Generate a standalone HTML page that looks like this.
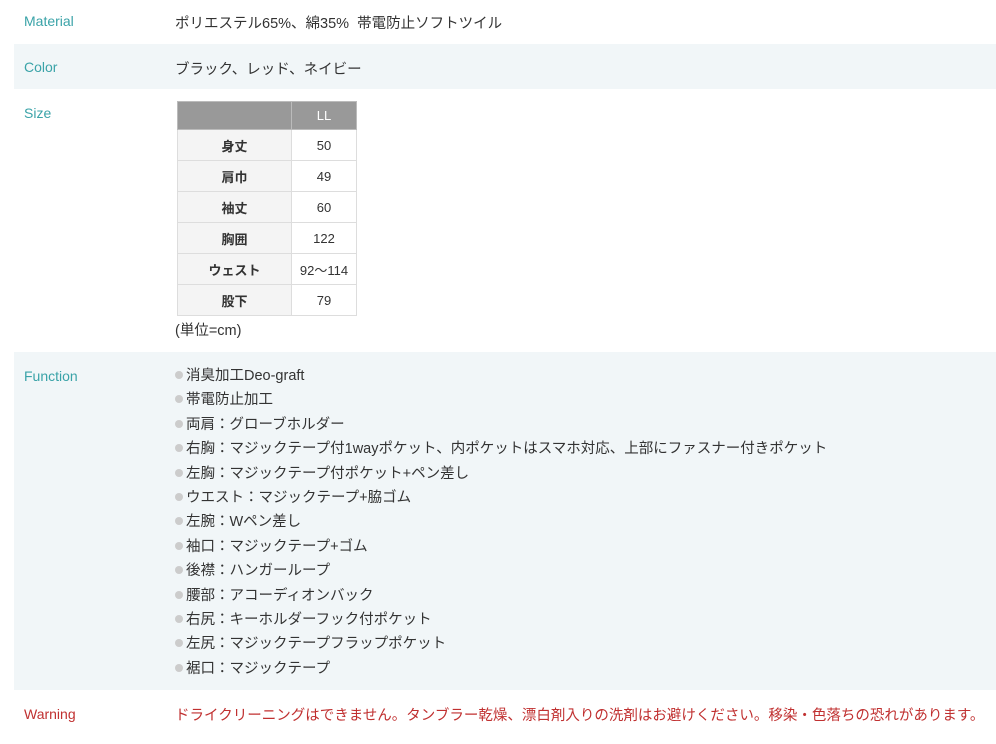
<!DOCTYPE html>
<html><head><meta charset="utf-8"><style>
body{margin:0;background:#fff;font-family:"Liberation Sans","Noto Sans CJK JP",sans-serif;font-size:14.5px;color:#333;width:996px;height:744px;overflow:hidden;position:relative}
.row{position:absolute;left:14px;right:0}
.lab{position:absolute;left:10px;color:#3aa3a8;font-size:14px}
.val{position:absolute;left:161px}
.bg{background:#f1f6f8}
table{border-collapse:collapse;position:absolute;left:177px;top:101px;font-size:13px}
td{border:1px solid #ddd;height:30px;text-align:center;padding:0}
td.h{background:#999;color:#fff;height:27px;border-color:#bbb}
td.k{background:#f4f4f4;font-weight:bold;width:113px}
td.v{width:64px;background:#fff}
ul{list-style:none;margin:0;padding:0}
li{height:24.4px;line-height:24.4px}
li:before{content:"";display:inline-block;width:8px;height:8px;border-radius:50%;background:#ccc;margin-right:3px;vertical-align:1px}
</style></head><body>
<div class="row" style="top:0;height:44px"><span class="lab" style="top:13px">Material</span><span class="val" style="top:12px">ポリエステル65%、綿35%&nbsp; 帯電防止ソフトツイル</span></div>
<div class="row bg" style="top:44px;height:45px"><span class="lab" style="top:15px">Color</span><span class="val" style="top:14px">ブラック、レッド、ネイビー</span></div>
<div class="row" style="top:89px;height:263px"><span class="lab" style="top:16px">Size</span></div>
<table>
<tr><td class="h" style="width:113px"></td><td class="h">LL</td></tr>
<tr><td class="k">身丈</td><td class="v">50</td></tr>
<tr><td class="k">肩巾</td><td class="v">49</td></tr>
<tr><td class="k">袖丈</td><td class="v">60</td></tr>
<tr><td class="k">胸囲</td><td class="v">122</td></tr>
<tr><td class="k">ウェスト</td><td class="v">92～114</td></tr>
<tr><td class="k">股下</td><td class="v">79</td></tr>
</table>
<div style="position:absolute;left:175px;top:319px">(単位=cm)</div>
<div class="row bg" style="top:352px;height:338px"><span class="lab" style="top:16px">Function</span>
<ul class="val" style="top:12px;left:161px">
<li>消臭加工Deo-graft</li><li>帯電防止加工</li><li>両肩：グローブホルダー</li><li>右胸：マジックテープ付1wayポケット、内ポケットはスマホ対応、上部にファスナー付きポケット</li><li>左胸：マジックテープ付ポケット+ペン差し</li><li>ウエスト：マジックテープ+脇ゴム</li><li>左腕：Wペン差し</li><li>袖口：マジックテープ+ゴム</li><li>後襟：ハンガーループ</li><li>腰部：アコーディオンバック</li><li>右尻：キーホルダーフック付ポケット</li><li>左尻：マジックテープフラップポケット</li><li>裾口：マジックテープ</li>
</ul></div>
<div class="row" style="top:690px;height:54px"><span class="lab" style="top:16px;color:#c03030">Warning</span><span class="val" style="top:14px;color:#c03030">ドライクリーニングはできません。タンブラー乾燥、漂白剤入りの洗剤はお避けください。移染・色落ちの恐れがあります。</span></div>
</body></html>
